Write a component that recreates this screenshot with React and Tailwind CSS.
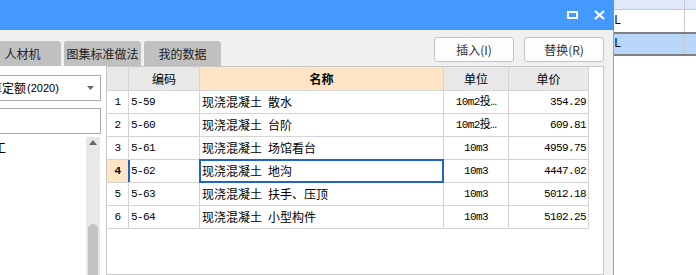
import React from "react";

const rows = [
  { n: "1", code: "5-59", a: "现浇混凝土", b: "散水", unit: "10m2投…", price: "354.29" },
  { n: "2", code: "5-60", a: "现浇混凝土", b: "台阶", unit: "10m2投…", price: "609.81" },
  { n: "3", code: "5-61", a: "现浇混凝土", b: "场馆看台", unit: "10m3", price: "4959.75" },
  { n: "4", code: "5-62", a: "现浇混凝土", b: "地沟", unit: "10m3", price: "4447.02", active: true },
  { n: "5", code: "5-63", a: "现浇混凝土", b: "扶手、压顶", unit: "10m3", price: "5012.18" },
  { n: "6", code: "5-64", a: "现浇混凝土", b: "小型构件", unit: "10m3", price: "5102.25" },
];

const mono = "font-['Liberation_Mono','Noto_Sans_CJK_SC',monospace] text-[11px] tracking-[-0.6px]";

const TableRow = ({ row }) => (
  <div className="flex h-[23px] border-b border-[#d4d4d4]">
    <div
      className={`w-[22px] shrink-0 border-r border-[#d4d4d4] flex items-center justify-center ${mono} ${
        row.active ? "bg-[#fde4c5] font-bold" : ""
      }`}
    >
      {row.n}
    </div>
    <div className={`relative w-[71px] shrink-0 border-r border-[#d4d4d4] flex items-center pl-[2px] ${mono}`}>
      {row.active && <div className="absolute left-[-1px] top-0 bottom-0 w-[2px] bg-[#1f64c8]" />}
      {row.code}
    </div>
    <div className="relative w-[244px] shrink-0 border-r border-[#d4d4d4] flex items-center pl-[2px] text-[12px]">
      {row.active && <div className="absolute inset-[-1px] border-2 border-[#1f64c8]" />}
      {row.a}
      <span className="ml-[6px]">{row.b}</span>
    </div>
    <div className={`w-[65px] shrink-0 border-r border-[#d4d4d4] flex items-center justify-center ${mono}`}>
      {row.unit}
    </div>
    <div className={`w-[80px] shrink-0 border-r border-[#d4d4d4] flex items-center justify-end pr-[2px] ${mono}`}>
      {row.price}
    </div>
  </div>
);

const App = () => {
  return (
    <div className="w-[696px] h-[275px] overflow-hidden flex bg-white text-black font-['Noto_Sans_CJK_SC',sans-serif]">
      {/* dialog */}
      <div className="w-[614px] shrink-0 flex flex-col">
        {/* title bar */}
        <div className="h-[30px] shrink-0 bg-[#4499ff] flex items-center justify-end gap-[16px] pr-[9px]">
          <svg width="11" height="8" viewBox="0 0 11 8">
            <rect x="1" y="1" width="9" height="6" fill="none" stroke="#fff" strokeWidth="2" />
          </svg>
          <svg width="11" height="10" viewBox="0 0 11 10">
            <path d="M1 1 L10 9 M10 1 L1 9" stroke="#fff" strokeWidth="2.2" />
          </svg>
        </div>

        <div className="flex-1 flex flex-col bg-[#f0f0f0] border-r border-[#a0a0a0] min-h-0">
          {/* tabs + buttons */}
          <div className="h-[36px] shrink-0 flex pr-[9px]">
            <div className="flex items-end gap-[3px]">
              {["人材机", "图集标准做法", "我的数据"].map((t, i) => (
                <div
                  key={t}
                  className={`w-[77px] h-[25px] shrink-0 rounded-t-[3px] bg-[#c0c0c0] flex items-center justify-center text-[12px] text-[#222] ${
                    i === 0 ? "ml-[-16px]" : ""
                  }`}
                >
                  {t}
                </div>
              ))}
            </div>
            <div className="ml-auto mt-[7px] flex gap-[10px]">
              {["插入(I)", "替换(R)"].map((t) => (
                <div
                  key={t}
                  className="w-[80px] h-[25px] rounded-[3px] border border-[#c4c4c4] bg-[#fdfdfd] flex items-center justify-center text-[12px] text-[#333]"
                >
                  {t}
                </div>
              ))}
            </div>
          </div>

          {/* content */}
          <div className="flex-1 flex pr-[9px] min-h-0">
            {/* left panel */}
            <div className="w-[106px] shrink-0 bg-white overflow-hidden flex justify-end">
              <div className="w-[205px] shrink-0 pr-[5px] flex flex-col">
                <div className="mt-[9px] h-[26px] border border-[#a8a8a8] flex items-center pl-[4px] pr-[6px] text-[12px]">
                  <span>房屋建筑工程预算定额</span>
                  <span className="font-['Liberation_Sans',sans-serif] text-[11px] ml-[1px]">(2020)</span>
                  <svg className="ml-auto" width="7" height="4" viewBox="0 0 7 4">
                    <path d="M0 0 H7 L3.5 4 Z" fill="#6a6a6a" />
                  </svg>
                </div>
                <div className="mt-[7px] h-[26px] border border-[#a8a8a8]" />
                <div className="mt-[3px] flex-1 flex min-h-0">
                  <div className="flex-1 pl-[81px] pt-[4px] text-[12px] leading-[14px]">人工</div>
                  <div className="w-[14px] mr-[1px] bg-[#e8e8e8] flex flex-col items-center">
                    <svg className="mt-[3px]" width="8" height="5" viewBox="0 0 8 5">
                      <path d="M0 5 H8 L4 0 Z" fill="#6a6a6a" />
                    </svg>
                    <div className="mt-[79px] flex-1 w-[10px] rounded-t-[5px] bg-[#c2c2c2]" />
                  </div>
                </div>
              </div>
            </div>

            {/* table */}
            <div className="w-[498px] shrink-0 border border-[#c8c8c8] bg-white">
              <div className="w-[482px] h-[24px] flex border-b border-[#d4d4d4] text-[12px]">
                <div className="w-[22px] shrink-0 border-r border-[#d4d4d4] bg-[#e8e8e8]" />
                <div className="w-[71px] shrink-0 border-r border-[#d4d4d4] bg-[#e8e8e8] flex items-center justify-center">编码</div>
                <div className="w-[244px] shrink-0 border-r border-[#d4d4d4] bg-[#fde4c5] flex items-center justify-center font-bold">名称</div>
                <div className="w-[65px] shrink-0 border-r border-[#d4d4d4] bg-[#e8e8e8] flex items-center justify-center">单位</div>
                <div className="w-[80px] shrink-0 border-r border-[#d4d4d4] bg-[#e8e8e8] flex items-center justify-center">单价</div>
              </div>
              <div className="w-[482px]">
                {rows.map((r) => (
                  <TableRow key={r.n} row={r} />
                ))}
              </div>
            </div>
          </div>
        </div>
      </div>

      {/* background app */}
      <div className="flex-1 flex flex-col font-['Liberation_Mono',monospace] text-[12px]">
        <div className="h-[10px] flex border-b border-[#c8c8c8] bg-[#dfe9f9]">
          <div className="w-[71px] border-r border-[#c8c8c8]" />
        </div>
        <div className="h-[24px] flex border-b-2 border-[#808080]">
          <div className="w-[71px] border-r border-[#c8c8c8] flex items-center pl-[0px]">L</div>
        </div>
        <div className="h-[22px] flex border-b-2 border-[#808080] bg-[#b7d6fa]">
          <div className="w-[71px] border-r border-[#c8c8c8] flex items-center">L</div>
        </div>
      </div>
    </div>
  );
};

export default App;
